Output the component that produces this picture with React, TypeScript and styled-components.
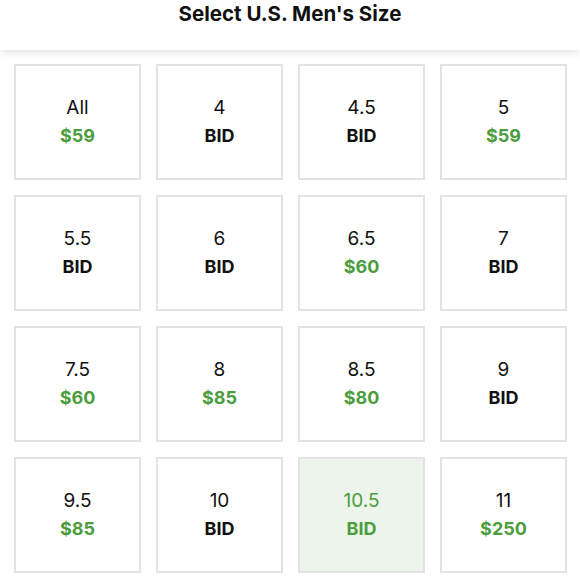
import React from "react";
import styled, { createGlobalStyle } from "styled-components";

const Global = createGlobalStyle`
  html, body { margin: 0; padding: 0; background: #fff; }
  body { font-family: Inter, "Open Sans", Arial, sans-serif; color: #111; }
`;

const Page = styled.div`
  width: 580px;
  height: 580px;
  overflow: hidden;
  background: #fff;
`;

const Header = styled.header`
  height: 50px;
  display: flex;
  justify-content: center;
  padding-top: 2px;
  box-sizing: border-box;
  box-shadow: 0 2px 8px rgba(0, 0, 0, 0.12);
  position: relative;
`;

const Title = styled.h1`
  margin: 0;
  font-size: 20.5px;
  font-weight: 700;
  line-height: 24px;
  letter-spacing: 0;
  color: #111;
`;

const Grid = styled.div`
  display: grid;
  grid-template-columns: repeat(4, 1fr);
  grid-auto-rows: 116px;
  gap: 15px;
  padding: 14px 13px 14px 14px;
`;

const Tile = styled.div<{ $selected?: boolean }>`
  box-sizing: border-box;
  border: 2px solid #e3e3e3;
  background: ${(p) => (p.$selected ? "#edf4eb" : "#fff")};
  display: flex;
  flex-direction: column;
  align-items: center;
  justify-content: center;
  gap: 6px;
  padding-bottom: 2px;
  color: ${(p) => (p.$selected ? "#4b9d3d" : "#111")};
`;

const Size = styled.div`
  font-size: 19px;
  line-height: 23px;
  font-weight: 400;
`;

const Price = styled.div<{ $green?: boolean }>`
  font-size: 18px;
  line-height: 22px;
  font-weight: 700;
  color: ${(p) => (p.$green ? "#4b9d3d" : "inherit")};
`;

const sizes: [string, string, boolean?][] = [
  ["All", "$59"],
  ["4", "BID"],
  ["4.5", "BID"],
  ["5", "$59"],
  ["5.5", "BID"],
  ["6", "BID"],
  ["6.5", "$60"],
  ["7", "BID"],
  ["7.5", "$60"],
  ["8", "$85"],
  ["8.5", "$80"],
  ["9", "BID"],
  ["9.5", "$85"],
  ["10", "BID"],
  ["10.5", "BID", true],
  ["11", "$250"],
];

export default function App() {
  return (
    <Page>
      <Global />
      <Header>
        <Title>Select U.S. Men's Size</Title>
      </Header>
      <Grid>
        {sizes.map(([s, p, sel]) => (
          <Tile key={s} $selected={sel}>
            <Size>{s}</Size>
            <Price $green={p !== "BID"}>{p}</Price>
          </Tile>
        ))}
      </Grid>
    </Page>
  );
}
